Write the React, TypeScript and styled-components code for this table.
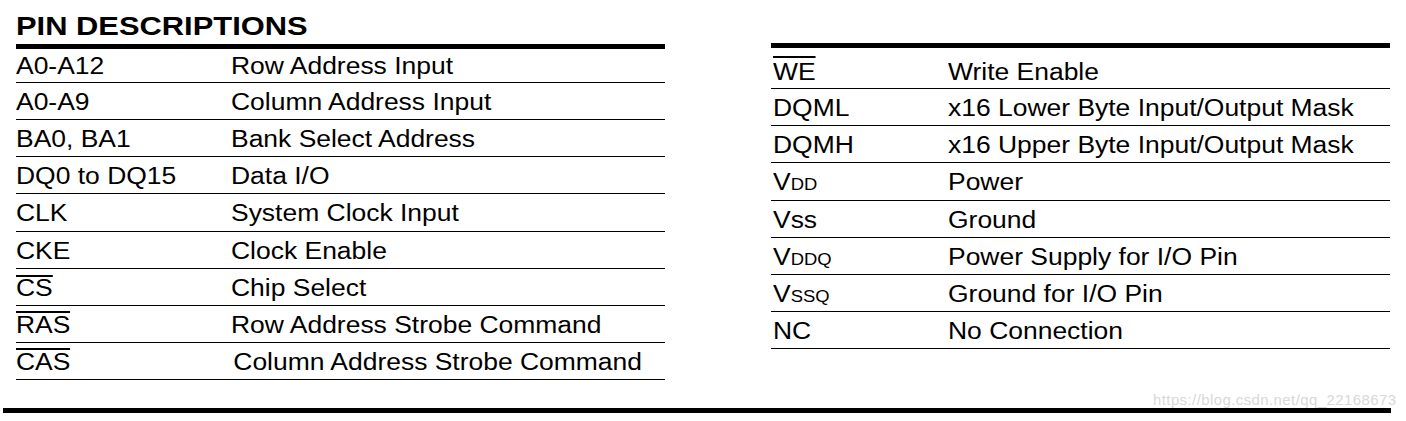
import React from 'react';
import styled, { createGlobalStyle } from 'styled-components';

const GlobalStyle = createGlobalStyle`
  html, body {
    margin: 0;
    padding: 0;
    background: #fff;
  }
  body {
    font-family: "Liberation Sans", Arial, Helvetica, sans-serif;
    color: #000;
  }
`;

// page frame
const Page = styled.div`
  position: relative;
  width: 1406px;
  height: 421px;
  overflow: hidden;
  display: flex;
  flex-direction: column;
`;

const Columns = styled.div`
  display: flex;
  align-items: flex-start;
  gap: 106px;
  padding-left: 16px;
`;

const Column = styled.div<{ $w: number; $top: number }>`
  width: ${p => p.$w}px;
  padding-top: ${p => p.$top}px;
  flex-shrink: 0;
`;

const Title = styled.h1`
  margin: 11px 0 0;
  height: 30px;
  line-height: 30px;
  font-size: 26.5px;
  font-weight: 700;
  white-space: nowrap;
  transform: scaleX(1.165);
  transform-origin: left center;
`;

const ThickRule = styled.div<{ $mt?: number }>`
  margin-top: ${p => p.$mt ?? 0}px;
  height: 5px;
  background: #000;
`;

// one line of the pin table
const Row = styled.div<{ $h: number; $pt: number; $pl: number; $cols: string }>`
  display: grid;
  grid-template-columns: ${p => p.$cols};
  box-sizing: border-box;
  height: ${p => p.$h}px;
  padding-top: ${p => p.$pt}px;
  padding-left: ${p => p.$pl}px;
  border-bottom: 1px solid #000;
  font-size: 23px;
  line-height: 34px;
`;

const Cell = styled.div<{ $shift?: number }>`
  white-space: nowrap;
  padding-left: ${p => p.$shift ?? 0}px;
  transform: scaleX(1.15);
  transform-origin: left center;
`;

// active-low signal name
const Over = styled.span<{ $gap: number }>`
  display: inline-block;
  line-height: 1;
  border-top: 2px solid #000;
  padding-top: ${p => p.$gap}px;
`;

const Small = styled.span`
  font-size: 16px;
`;

const BottomRule = styled.div`
  margin: 28px 0 0 3px;
  width: 1388px;
  height: 5px;
  background: #000;
`;

const Watermark = styled.div`
  position: absolute;
  left: 1153px;
  top: 391px;
  font-size: 15px;
  line-height: 17px;
  letter-spacing: 0.4px;
  color: #d8d8d8;
  white-space: nowrap;
`;

type Pin = { pin: React.ReactNode; desc: string; shift?: number };

const leftPins: Pin[] = [
  { pin: 'A0-A12', desc: 'Row Address Input' },
  { pin: 'A0-A9', desc: 'Column Address Input' },
  { pin: 'BA0, BA1', desc: 'Bank Select Address' },
  { pin: 'DQ0 to DQ15', desc: 'Data I/O' },
  { pin: 'CLK', desc: 'System Clock Input' },
  { pin: 'CKE', desc: 'Clock Enable' },
  { pin: <Over $gap={0}>CS</Over>, desc: 'Chip Select' },
  { pin: <Over $gap={1}>RAS</Over>, desc: 'Row Address Strobe Command' },
  { pin: <Over $gap={1}>CAS</Over>, desc: 'Column Address Strobe Command', shift: 2 },
];

const rightPins: Pin[] = [
  { pin: <Over $gap={3}>WE</Over>, desc: 'Write Enable' },
  { pin: 'DQML', desc: 'x16 Lower Byte Input/Output Mask' },
  { pin: 'DQMH', desc: 'x16 Upper Byte Input/Output Mask' },
  { pin: <>V<Small>DD</Small></>, desc: 'Power' },
  { pin: 'Vss', desc: 'Ground' },
  { pin: <>V<Small>DDQ</Small></>, desc: 'Power Supply for I/O Pin' },
  { pin: <>V<Small>SSQ</Small></>, desc: 'Ground for I/O Pin' },
  { pin: 'NC', desc: 'No Connection' },
];

type TableProps = {
  pins: Pin[];
  cols: string;
  indent: number;
  first: { h: number; pt: number };
  pitch: number;
};

const PinTable: React.FC<TableProps> = ({ pins, cols, indent, first, pitch }) => (
  <div>
    {pins.map((p, i) => (
      <Row
        key={i}
        $cols={cols}
        $pl={indent}
        $h={i === 0 ? first.h : pitch}
        $pt={i === 0 ? first.pt : 2}
      >
        <Cell>{p.pin}</Cell>
        <Cell $shift={p.shift}>{p.desc}</Cell>
      </Row>
    ))}
  </div>
);

export default function App() {
  return (
    <>
      <GlobalStyle />
      <Page>
        <Columns>
          <Column $w={649} $top={0}>
            <Title>PIN DESCRIPTIONS</Title>
            <ThickRule $mt={3} />
            <PinTable pins={leftPins} cols="215px 1fr" indent={0} first={{ h: 34, pt: 0 }} pitch={37.125} />
          </Column>
          <Column $w={619} $top={43}>
            <ThickRule />
            <PinTable pins={rightPins} cols="175px 1fr" indent={2} first={{ h: 41, pt: 7 }} pitch={37.2} />
          </Column>
        </Columns>
        <BottomRule />
        <Watermark>https://blog.csdn.net/qq_22168673</Watermark>
      </Page>
    </>
  );
}
